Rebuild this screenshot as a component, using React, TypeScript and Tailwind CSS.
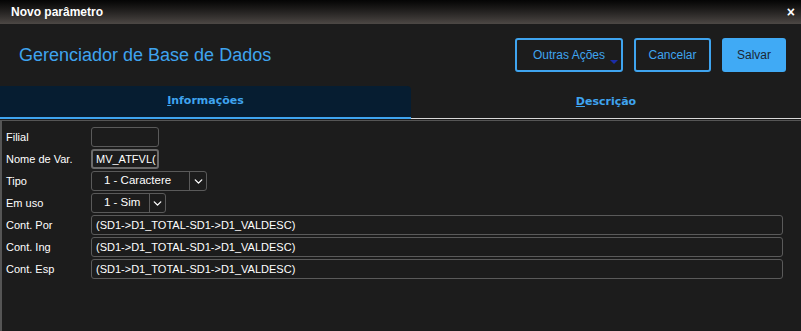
import { ChevronDown } from "lucide-react";

const font = "font-['Liberation_Sans',Arial,sans-serif]";

function Row({ label, children }: { label: string; children: React.ReactNode }) {
  return (
    <div className="flex h-[20px] items-center">
      <div className="w-[89px] pl-[4px] text-[11px] text-white">{label}</div>
      {children}
    </div>
  );
}

function Select({ value, width, split }: { value: string; width: string; split: string }) {
  return (
    <div className={`flex h-[20px] ${width} rounded-[3px] border border-[#5a5a5a]`}>
      <div className={`${split} flex items-center border-r border-[#5a5a5a] pl-[12px] text-[11.5px] text-white`}>
        {value}
      </div>
      <div className="flex flex-1 items-center justify-center text-white">
        <ChevronDown size={13} strokeWidth={2.5} />
      </div>
    </div>
  );
}

function TextBox({ value }: { value: string }) {
  return (
    <div className="flex h-[20px] w-[692px] items-center rounded-[3px] border border-[#5a5a5a] pl-[4px] text-[11px] text-white">
      {value}
    </div>
  );
}

export default function App() {
  const expr = "(SD1->D1_TOTAL-SD1->D1_VALDESC)";
  return (
    <div className={`flex h-[331px] w-[801px] flex-col bg-[#1c1c1c] ${font}`}>
      <header className="flex h-[24px] items-center justify-between bg-gradient-to-b from-[#050505] to-[#4d4845] pl-[11px] pr-[6px]">
        <span className="text-[12px] font-bold text-white">Novo parâmetro</span>
        <span className="text-[14px] font-bold leading-none text-white">×</span>
      </header>

      <div className="flex h-[62px] items-center justify-between pl-[19px] pr-[15px]">
        <h1 className="text-[18px] text-[#3fa4ef]">Gerenciador de Base de Dados</h1>
        <div className="flex gap-[11px]">
          <button className="relative h-[34px] w-[108px] rounded-[3px] border-2 border-[#3fa4ef] text-[12px] text-[#3fa4ef]">
            Outras Ações
            <span className="absolute bottom-[6px] right-[3px] h-0 w-0 border-x-[4px] border-t-[4px] border-x-transparent border-t-[#1b2ca8]" />
          </button>
          <button className="h-[34px] w-[77px] rounded-[3px] border-2 border-[#3fa4ef] text-[12px] text-[#3fa4ef]">
            Cancelar
          </button>
          <button className="h-[34px] w-[64px] rounded-[3px] bg-[#40aaf5] text-[12px] text-[#1c2733]">
            Salvar
          </button>
        </div>
      </div>

      <div className="flex h-[33px]">
        <div className="flex w-[411px] items-center justify-center rounded-tr-[4px] border-b-2 border-[#3fa4ef] bg-[#061d31] font-['DejaVu_Sans',Verdana,sans-serif] text-[11px] font-bold text-[#3fa4ef]">
          <span><span className="underline">I</span>nformações</span>
        </div>
        <div className="flex flex-1 items-center justify-center border-b border-[#d8d8d8] font-['DejaVu_Sans',Verdana,sans-serif] text-[11px] font-bold text-[#3fa4ef]">
          <span><span className="underline">D</span>escrição</span>
        </div>
      </div>

      <div className="mt-[1px] flex flex-1 flex-col gap-[2px] border-l-2 border-t border-[#555] pt-[6px]">
        <Row label="Filial">
          <div className="h-[20px] w-[68px] rounded-[3px] border border-[#5a5a5a]" />
        </Row>
        <Row label="Nome de Var.">
          <div className="flex h-[20px] w-[68px] items-center overflow-hidden whitespace-nowrap rounded-[3px] border-2 border-[#6a6a6a] pl-[3px] text-[11px] text-white">
            MV_ATFVL(
          </div>
        </Row>
        <Row label="Tipo">
          <Select value="1 - Caractere" width="w-[116px]" split="w-[98px]" />
        </Row>
        <Row label="Em uso">
          <Select value="1 - Sim" width="w-[75px]" split="w-[58px]" />
        </Row>
        <Row label="Cont. Por">
          <TextBox value={expr} />
        </Row>
        <Row label="Cont. Ing">
          <TextBox value={expr} />
        </Row>
        <Row label="Cont. Esp">
          <TextBox value={expr} />
        </Row>
      </div>
    </div>
  );
}
